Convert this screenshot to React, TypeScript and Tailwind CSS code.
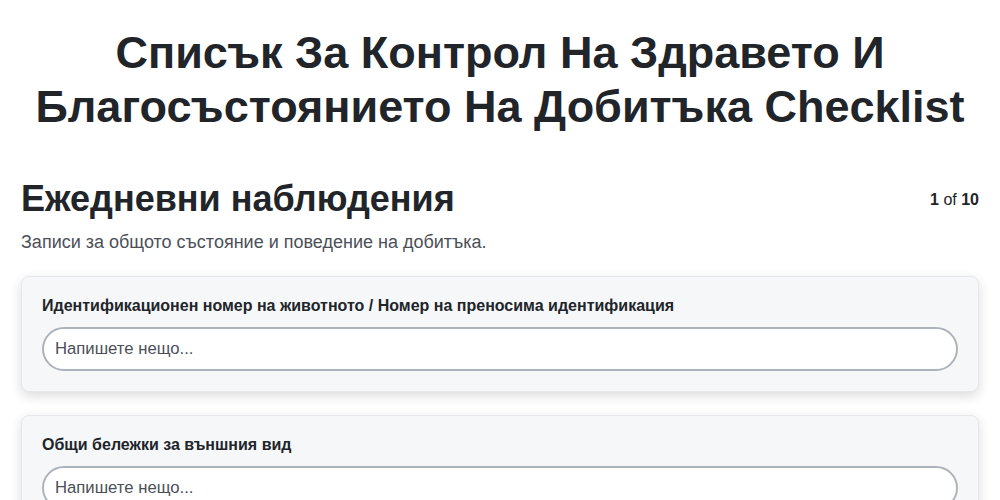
const fields = [
  'Идентификационен номер на животното / Номер на преносима идентификация',
  'Общи бележки за външния вид',
]

export default function App() {
  return (
    <div className="min-h-screen bg-white text-[#212529] font-['Liberation_Sans',Arial,sans-serif]">
      <h1 className="pt-[26px] px-8 text-center text-[45px] leading-[54px] font-bold">
        Списък За Контрол На Здравето И
        <br />
        Благосъстоянието На Добитъка Checklist
      </h1>

      <div className="px-[21px] pt-[43px]">
        <div className="flex items-start justify-between">
          <h2 className="text-[36px] leading-[43px] font-bold">Ежедневни наблюдения</h2>
          <div className="pt-[11px] text-[16px] text-[#212529]">
            <span className="font-bold">1</span> of <span className="font-bold">10</span>
          </div>
        </div>
        <p className="mt-[9px] text-[18px] leading-[27px] text-[#4b5058]">
          Записи за общото състояние и поведение на добитъка.
        </p>

        <div className="mt-[20px] flex flex-col gap-[23px]">
          {fields.map((label) => (
            <div
              key={label}
              className="rounded-lg border border-[#e6e8eb] bg-[#f6f7f9] px-[20px] pt-[19px] pb-[20px] shadow-[0_4px_12px_rgba(0,0,0,0.14)]"
            >
              <label className="block text-[16px] leading-5 font-bold text-[#212529]">{label}</label>
              <input
                type="text"
                placeholder="Напишете нещо..."
                className="mt-[11px] block h-[44px] w-full rounded-full border-2 border-[#adb3ba] bg-white px-[11px] text-[16.7px] text-[#212529] placeholder:text-[#4b5058] outline-none"
              />
            </div>
          ))}
        </div>
      </div>
    </div>
  )
}
